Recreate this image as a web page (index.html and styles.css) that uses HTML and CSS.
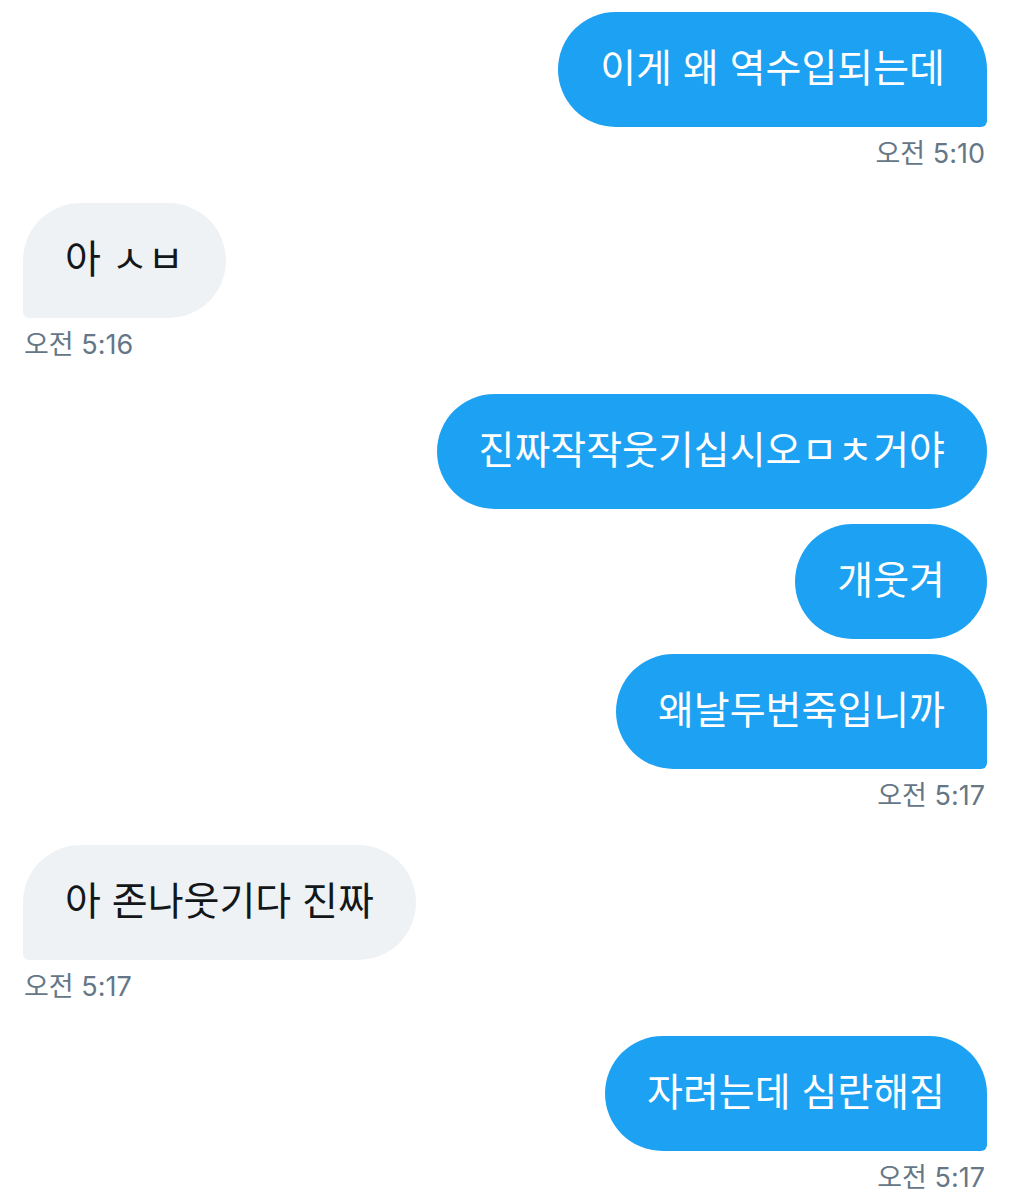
FILE: index.html
```html
<!DOCTYPE html>
<html lang="ko">
<head>
<meta charset="utf-8">
<title>DM</title>
<link rel="stylesheet" href="styles.css">
</head>
<body>
<main class="chat">
  <section class="group sent">
    <div class="bubble last">이게 왜 역수입되는데</div>
    <div class="time">오전 5:10</div>
  </section>
  <section class="group recv">
    <div class="bubble last">아 ㅅㅂ</div>
    <div class="time">오전 5:16</div>
  </section>
  <section class="group sent">
    <div class="bubble">진짜작작웃기십시오ㅁㅊ거야</div>
    <div class="bubble">개웃겨</div>
    <div class="bubble last">왜날두번죽입니까</div>
    <div class="time">오전 5:17</div>
  </section>
  <section class="group recv">
    <div class="bubble last">아 존나웃기다 진짜</div>
    <div class="time">오전 5:17</div>
  </section>
  <section class="group sent">
    <div class="bubble last">자려는데 심란해짐</div>
    <div class="time">오전 5:17</div>
  </section>
</main>
</body>
</html>
```
FILE: styles.css
```css
html, body {
  margin: 0;
  padding: 0;
  background: #ffffff;
}
body {
  font-family: "Noto Sans CJK KR", "Noto Sans", sans-serif;
}
.chat {
  display: flex;
  flex-direction: column;
  gap: 34px;
  padding: 12px 23px 0 23px;
}
.group {
  display: flex;
  flex-direction: column;
  gap: 15px;
}
.group.sent { align-items: flex-end; }
.group.recv { align-items: flex-start; }
.bubble {
  box-sizing: border-box;
  height: 115px;
  display: flex;
  align-items: center;
  padding: 0 42px 8px 42px;
  font-size: 39px;
  line-height: 1;
  border-radius: 58px;
  white-space: nowrap;
}
.sent .bubble {
  background: #1da1f2;
  color: #ffffff;
}
.recv .bubble {
  background: #eff2f4;
  color: #14171a;
}
.sent .bubble.last { border-bottom-right-radius: 6px; }
.recv .bubble.last { border-bottom-left-radius: 6px; }
.time {
  margin-top: -3px;
  font-size: 27px;
  line-height: 30px;
  color: #657786;
  font-family: "Inter", "Noto Sans CJK KR", sans-serif;
}
.sent .time { padding-right: 2px; }
.recv .time { padding-left: 1px; }
```
